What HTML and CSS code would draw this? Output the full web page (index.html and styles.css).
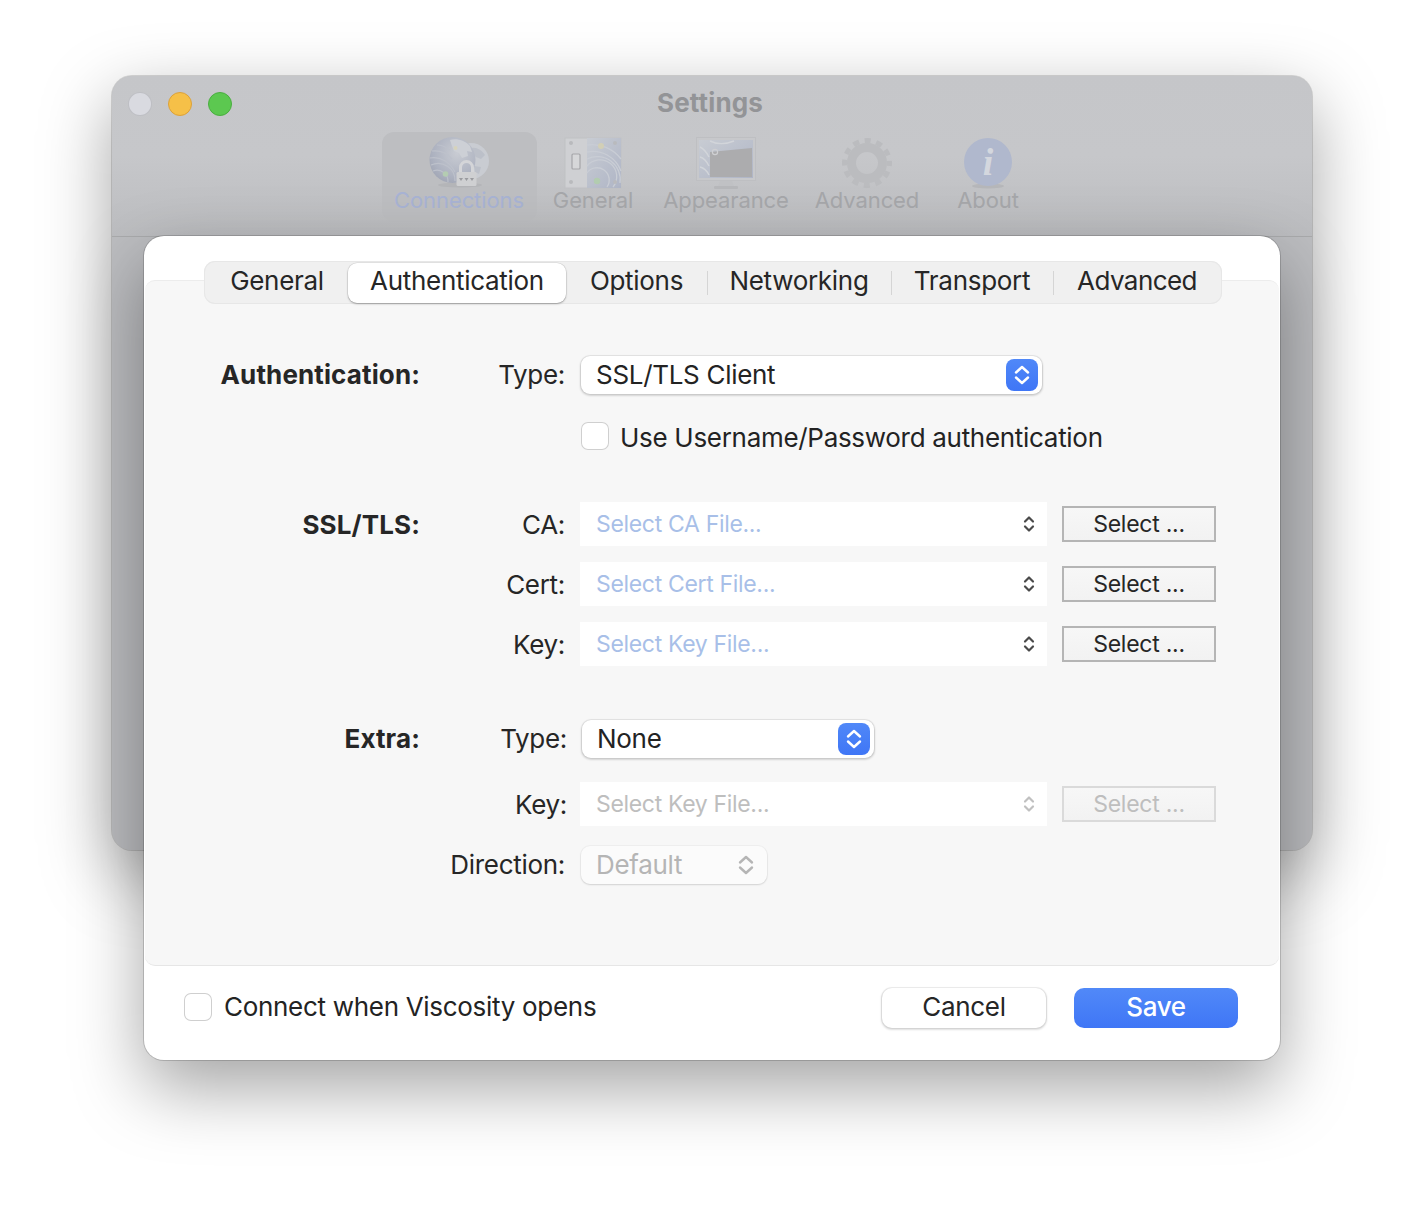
FILE: index.html
```html
<!DOCTYPE html>
<html lang="en">
<head>
<meta charset="utf-8">
<title>Settings</title>
<link rel="stylesheet" href="styles.css">
</head>
<body>
<svg class="defs" width="0" height="0" aria-hidden="true">
  <defs>
    <symbol id="chev" viewBox="0 0 12 20"><path d="M2 7.5 6 3.5 10 7.5M2 12.5 6 16.5 10 12.5" fill="none" stroke="currentColor" stroke-width="2.2" stroke-linecap="round" stroke-linejoin="round"/></symbol>
    <symbol id="chev-big" viewBox="0 0 16 24"><path d="M2 9.500 8 4 14 9.500M2 14.500 8 20 14 14.500" fill="none" stroke="currentColor" stroke-width="2.400" stroke-linecap="round" stroke-linejoin="round"/></symbol>
    <radialGradient id="globeFill" cx=".6" cy=".35" r=".75"><stop offset="0" stop-color="#c9ccd3"/><stop offset=".7" stop-color="#adb2c0"/><stop offset="1" stop-color="#9ea3b2"/></radialGradient>
    <linearGradient id="mapFill" x1="0" y1="0" x2="1" y2="1"><stop offset="0" stop-color="#c8ccd3"/><stop offset="1" stop-color="#afb5c6"/></linearGradient>
  </defs>
</svg>
<main class="desktop">
  <section class="window">
    <header class="titlebar">
      <div class="lights"><span class="light light-close"></span><span class="light light-min"></span><span class="light light-max"></span></div>
      <h1 class="title">Settings</h1>
      <nav class="toolbar">
        <div class="tool tool-connections active">
          <svg class="tool-icon" width="64" height="54" viewBox="0 0 64 54">
            <ellipse cx="32" cy="49" rx="22" ry="2.500" fill="#b4b5b8"/>
            <circle cx="43" cy="25" r="18" fill="#c9ccd2"/>
            <path d="M44 12c4-1 10 2 13 7l-4 4-5-2-4-4zM46 30l7 1-2 7-4-2z" fill="#bcc0c9"/>
            <circle cx="24.500" cy="24" r="23" fill="url(#globeFill)"/>
            <path d="M22 4c6-2 15 0 20 6l2 6-5-1 1 5-6 2-3-5-5-2-2-5z" fill="#cdd0d6"/>
            <path d="M3 29a17 17 0 0 1 24 16M5 35a11 11 0 0 1 15 11M2 22c10-2 20 4 25 14M4 15c8-1 15 2 20 8M9 9c5 0 9 2 13 5" fill="none" stroke="#bdc1cb" stroke-width="1.200"/>
            <circle cx="17.500" cy="38" r="2.800" fill="#b4ccb2"/>
            <circle cx="27.500" cy="12" r="2" fill="#d6d3bc"/>
            <path d="M32.500 37v-5.500a6 6 0 0 1 12 0V37" fill="none" stroke="#d4d5d8" stroke-width="3"/>
            <rect x="28.500" y="36" width="20" height="14" rx="1.500" fill="#cfd0d2"/>
            <path d="M31 42h4l-2 3zM36.500 42h4l-2 3zM42 42h4l-2 3z" fill="#9a9b9f"/>
          </svg>
          <span class="tool-label">Connections</span>
        </div>
        <div class="tool">
          <svg class="tool-icon" width="58" height="52" viewBox="0 0 58 52">
            <rect x="1" y="1" width="56" height="50" fill="#cfd0d3" stroke="#c0c1c4"/>
            <rect x="23" y="1" width="34" height="50" fill="url(#mapFill)"/>
            <g fill="none" stroke="#c9cdd5" stroke-width="1.300">
              <path d="M23 36a10 10 0 0 1 20 14"/>
              <path d="M23 29a16 16 0 0 1 26 21"/>
              <path d="M23 22a23 23 0 0 1 33 24"/>
              <path d="M23 15a30 30 0 0 1 34 19"/>
              <path d="M23 8a36 36 0 0 1 34 14"/>
            </g>
            <circle cx="37" cy="9" r="3" fill="#d2cfb6"/>
            <circle cx="33" cy="44" r="3.200" fill="#b2ccb0"/>
            <circle cx="7" cy="6" r="2" fill="#b9babd"/><circle cx="7" cy="45" r="2" fill="#b9babd"/><circle cx="51" cy="6" r="2" fill="#b9babd"/><circle cx="51" cy="45" r="2" fill="#b9babd"/>
            <rect x="8" y="17" width="8" height="15" rx="1" fill="#d6d7d9" stroke="#a5a6a9" stroke-width="1.200"/>
          </svg>
          <span class="tool-label">General</span>
        </div>
        <div class="tool">
          <svg class="tool-icon" width="60" height="52" viewBox="0 0 60 52">
            <rect x="0.500" y="0.500" width="59" height="43" fill="#c7c8cb" stroke="#bebfc2"/>
            <rect x="3" y="3" width="54" height="38" fill="url(#mapFill)"/>
            <path d="M14 15 56 11V40H14z" fill="#acacae"/>
            <path d="M4 10c4 2 7 6 9 10M4 20c4 1 7 5 9 9M4 30c4 1 7 4 9 8M14 4c6 3 14 4 24 0" fill="none" stroke="#d2d5da" stroke-width="1.400"/>
            <circle cx="19" cy="15" r="2.600" fill="none" stroke="#cfd0d3" stroke-width="1.200"/>
            <path d="M24 44h12l2 5H22z" fill="#c0c1c4"/>
            <rect x="18" y="49" width="24" height="3" rx="1" fill="#b7b8bb"/>
          </svg>
          <span class="tool-label">Appearance</span>
        </div>
        <div class="tool">
          <svg class="tool-icon" width="52" height="52" viewBox="0 0 52 52">
            <g fill="none" stroke="#bbbcbf">
              <circle cx="26" cy="26" r="15.500" stroke-width="9"/>
              <circle cx="26" cy="26" r="22.500" stroke-width="5" stroke-dasharray="6.200 5.580" stroke-dashoffset="3.100"/>
            </g>
          </svg>
          <span class="tool-label">Advanced</span>
        </div>
        <div class="tool">
          <svg class="tool-icon" width="50" height="52" viewBox="0 0 50 52">
            <ellipse cx="25" cy="49" rx="16" ry="2.500" fill="#b6b7ba"/>
            <circle cx="25" cy="25" r="24" fill="#b0b8cd"/>
            <text class="info-glyph" x="25" y="38" text-anchor="middle">i</text>
          </svg>
          <span class="tool-label">About</span>
        </div>
      </nav>
    </header>
    <div class="window-body"></div>
  </section>

  <section class="sheet">
    <div class="sheet-top">
      <div class="tabs">
        <span class="tab tab-general">General</span>
        <span class="tab tab-selected">Authentication</span>
        <span class="tab tab-options">Options</span><i class="tab-sep"></i>
        <span class="tab tab-networking">Networking</span><i class="tab-sep"></i>
        <span class="tab tab-transport">Transport</span><i class="tab-sep"></i>
        <span class="tab tab-advanced">Advanced</span>
      </div>
    </div>

    <div class="panel">
      <div class="form">
        <div class="row row-auth lifted">
          <div class="section-label">Authentication:</div>
          <div class="field-label">Type:</div>
          <div class="popup popup-auth"><span class="popup-text">SSL/TLS Client</span><span class="stepper"><svg width="16" height="24"><use href="#chev-big"/></svg></span></div>
        </div>
        <div class="row row-check">
          <div class="section-label"></div>
          <div class="field-label"></div>
          <label class="check"><span class="box"></span><span class="check-text">Use Username/Password authentication</span></label>
        </div>

        <div class="row row-ca">
          <div class="section-label">SSL/TLS:</div>
          <div class="field-label">CA:</div>
          <div class="combo"><span class="combo-text">Select CA File...</span><svg class="combo-chev" width="12" height="20"><use href="#chev"/></svg></div>
          <button class="select-btn" type="button">Select ...</button>
        </div>
        <div class="row row-file">
          <div class="section-label"></div>
          <div class="field-label">Cert:</div>
          <div class="combo"><span class="combo-text">Select Cert File...</span><svg class="combo-chev" width="12" height="20"><use href="#chev"/></svg></div>
          <button class="select-btn" type="button">Select ...</button>
        </div>
        <div class="row row-file">
          <div class="section-label"></div>
          <div class="field-label">Key:</div>
          <div class="combo"><span class="combo-text">Select Key File...</span><svg class="combo-chev" width="12" height="20"><use href="#chev"/></svg></div>
          <button class="select-btn" type="button">Select ...</button>
        </div>

        <div class="row row-extra lifted">
          <div class="section-label">Extra:</div>
          <div class="field-label shifted">Type:</div>
          <div class="popup popup-extra"><span class="popup-text">None</span><span class="stepper"><svg width="16" height="24"><use href="#chev-big"/></svg></span></div>
        </div>
        <div class="row row-extra-key disabled">
          <div class="section-label"></div>
          <div class="field-label shifted">Key:</div>
          <div class="combo"><span class="combo-text">Select Key File...</span><svg class="combo-chev" width="12" height="20"><use href="#chev"/></svg></div>
          <button class="select-btn" type="button">Select ...</button>
        </div>
        <div class="row row-direction lifted">
          <div class="section-label"></div>
          <div class="field-label">Direction:</div>
          <div class="popup popup-direction"><span class="popup-text">Default</span><svg class="direction-chev" width="16" height="24"><use href="#chev-big"/></svg></div>
        </div>
      </div>
    </div>

    <footer class="sheet-footer">
      <label class="check check-footer"><span class="box"></span><span class="check-text">Connect when Viscosity opens</span></label>
      <div class="actions">
        <button class="btn btn-cancel" type="button">Cancel</button>
        <button class="btn btn-save" type="button">Save</button>
      </div>
    </footer>
  </section>
</main>
</body>
</html>
```

FILE: styles.css
```css
* { box-sizing: border-box; }
html, body { margin: 0; padding: 0; }
body {
  width: 1424px;
  height: 1208px;
  background: #fff;
  overflow: hidden;
  font-family: Inter, "Liberation Sans", sans-serif;
  color: #232323;
}
.defs { position: absolute; }
.desktop { position: relative; width: 1424px; height: 1208px; }

/* Background window */
.window {
  position: absolute;
  left: 112px;
  top: 76px;
  width: 1200px;
  height: 774px;
  border-radius: 20px;
  overflow: visible;
  background: #bcbdc0;
  box-shadow: 0 0 0 1px rgba(0,0,0,.14), 0 24px 70px rgba(0,0,0,.36);
  display: flex;
  flex-direction: column;
}
.titlebar {
  height: 161px;
  flex: none;
  position: relative;
  border-radius: 20px 20px 0 0;
  background: linear-gradient(#c5c6c9, #c6c7ca 50%, #bcbdc0);
  border-bottom: 1px solid #a9aaac;
}
.lights { display: flex; gap: 16px; padding: 16px 0 0 16px; }
.light { width: 24px; height: 24px; border-radius: 50%; border: 1px solid rgba(0,0,0,.12); }
.light-close { background: #d9dae0; }
.light-min { background: #f6c048; border-color: #dca13a; }
.light-max { background: #5cc850; border-color: #4aae40; }
.title {
  position: absolute;
  left: 0;
  right: 0;
  top: 12px;
  margin: 0;
  padding-right: 4px;
  text-align: center;
  font-size: 26px;
  line-height: 30px;
  font-weight: 700;
  letter-spacing: .15px;
  color: #939497;
}
.toolbar {
  position: absolute;
  left: 270px;
  top: 56px;
  display: flex;
}
.tool {
  height: 90px;
  width: 112px;
  display: flex;
  flex-direction: column;
  align-items: center;
  position: relative;
  border-radius: 12px;
  padding-top: 5px;
}
.tool-icon { display: block; flex: none; }
.tool:nth-child(3) { width: 154px; }
.tool:nth-child(4) { width: 128px; }
.tool:nth-child(5) { width: 114px; }
.tool-connections { width: 155px; background: #bdbec1; padding-top: 4px; }
.tool-label {
  position: absolute;
  top: 55px;
  left: 0;
  right: 0;
  text-align: center;
  font-size: 22px;
  line-height: 26px;
  letter-spacing: -.1px;
  color: #a6a7aa;
  white-space: nowrap;
}
.tool-connections .tool-label { color: #a8b3d4; padding-right: 1px; }
.info-glyph {
  font-family: "Liberation Serif", serif;
  font-style: italic;
  font-weight: 700;
  font-size: 38px;
  fill: #d4d7de;
}
.window-body { flex: 1; border-radius: 0 0 20px 20px; background: #bcbdc0; }

/* Sheet */
.sheet {
  position: absolute;
  left: 144px;
  top: 236px;
  width: 1136px;
  height: 824px;
  border-radius: 20px;
  background: #fff;
  box-shadow: 0 0 0 1px rgba(0,0,0,.16), 0 28px 70px rgba(0,0,0,.36);
  display: flex;
  flex-direction: column;
  font-size: 26px;
  letter-spacing: -0.3px;
}
.sheet-top { height: 44px; flex: none; position: relative; z-index: 1; }
.tabs {
  position: absolute;
  left: 60px;
  top: 25px;
  width: 1018px;
  height: 43px;
  border-radius: 11px;
  background: #f0f0f0;
  box-shadow: inset 0 0 0 1px #e7e7e7;
  display: flex;
  align-items: center;
}
.tab { display: block; height: 40px; line-height: 36px; text-align: center; flex: none; color: #262626; }
.tab-general { width: 144px; padding-left: 2px; }
.tab-selected {
  width: 218px;
  background: #fff;
  border-radius: 9px;
  box-shadow: 0 0 0 .5px rgba(0,0,0,.1), 0 1px 2px rgba(0,0,0,.3);
}
.tab-options { width: 141px; }
.tab-networking { width: 184px; }
.tab-transport { width: 162px; }
.tab-advanced { width: 168px; letter-spacing: -0.55px; }
.tab-sep { width: 1px; height: 24px; background: #d5d5d5; flex: none; margin-right: -1px; }

.panel {
  flex: none;
  height: 686px;
  margin: 0 1px;
  background: #f7f7f7;
  border-top: 1px solid #ececec;
  border-bottom: 1px solid #e6e6e6;
  border-radius: 10px;
  padding-top: 74px;
}
.form { display: flex; flex-direction: column; }
.row { display: flex; align-items: center; height: 40px; }
.section-label {
  width: 275px;
  flex: none;
  text-align: right;
  font-weight: 700;
  letter-spacing: 0.12px;
  color: #262626;
}
.field-label { width: 146px; flex: none; text-align: right; padding-right: 1px; color: #262626; }
.field-label.shifted { width: 148px; }
.lifted .section-label, .lifted .field-label, .lifted .popup-text { padding-bottom: 2px; }
.popup { margin-left: 15px; }
.combo { margin-left: 14px; }
.check { margin-left: 15px; }
.row-check { margin-top: 21px; height: 40px; }
.row-check .check { gap: 11px; }
.row-check .check-text { padding: 2px 0 0; }
.row-ca { margin-top: 46px; height: 44px; }
.row-file { margin-top: 16px; height: 44px; }
.row-extra { margin-top: 53px; }
.row-extra .popup { margin-left: 14px; }
.row-extra-key { margin-top: 23px; height: 44px; }
.row-extra-key .combo { margin-left: 12px; }
.row-direction { margin-top: 19px; }

.popup {
  height: 38px;
  flex: none;
  position: relative;
  display: flex;
  align-items: center;
  border-radius: 9px;
  background: #fff;
  padding-left: 15px;
  box-shadow: 0 0 0 1px rgba(0,0,0,.05), 0 1px 2px 1px rgba(0,0,0,.14);
}
.popup-auth { width: 461px; }
.popup-extra { width: 292px; }
.popup-direction {
  width: 186px;
  background: #fbfbfb;
  color: #b5b5b5;
  box-shadow: 0 0 0 1px rgba(0,0,0,.03), 0 1px 2px rgba(0,0,0,.12);
}
.stepper {
  position: absolute;
  right: 4px;
  top: 3px;
  width: 32px;
  height: 32px;
  border-radius: 8px;
  background: linear-gradient(#5088f8, #3f76f6);
  color: #fff;
  display: flex;
  align-items: center;
  justify-content: center;
}
.direction-chev { position: absolute; right: 13px; top: 7px; color: #b5b5b5; }

.check { display: flex; align-items: center; gap: 12px; cursor: default; }
.check-text { padding-bottom: 2px; }
.box {
  width: 28px;
  height: 28px;
  flex: none;
  border-radius: 7px;
  background: #fff;
  box-shadow: inset 0 0 0 1px #cfcfcf;
}

.combo {
  width: 467px;
  height: 44px;
  flex: none;
  background: #fff;
  display: flex;
  align-items: center;
  justify-content: space-between;
  padding: 0 12px 0 16px;
  font-size: 23px;
  letter-spacing: -0.33px;
  color: #a8bfe8;
}
.combo-chev { color: #4a4a4a; }
.select-btn {
  margin: 0 0 0 15px;
  width: 154px;
  height: 36px;
  flex: none;
  padding: 0;
  border: 2px solid #b5b5b5;
  border-radius: 0;
  background: linear-gradient(#f7f7f7, #f2f2f2);
  font: inherit;
  font-size: 23px;
  letter-spacing: -0.25px;
  color: #262626;
}
.disabled .combo { color: #bebebe; }
.disabled .combo-chev { color: #c0c0c0; }
.disabled .select-btn { border-color: #dadada; color: #bebebe; }

/* Footer */
.sheet-footer {
  flex: 1;
  display: flex;
  align-items: center;
  justify-content: space-between;
  padding: 0 42px 12px 40px;
}
.check-footer { margin-left: 0; }
.actions { display: flex; gap: 28px; align-items: center; margin-top: 2px; }
.btn {
  height: 40px;
  border: 0;
  border-radius: 10px;
  padding: 0 0 4px;
  font: inherit;
  letter-spacing: -0.3px;
}
.btn-cancel {
  width: 164px;
  background: #fff;
  color: #262626;
  box-shadow: 0 0 0 1px rgba(0,0,0,.05), 0 1px 2px 1px rgba(0,0,0,.13);
}
.btn-save {
  width: 164px;
  color: #fff;
  font-weight: 500;
  background: linear-gradient(#5189f8, #3f76f6);
}
```
